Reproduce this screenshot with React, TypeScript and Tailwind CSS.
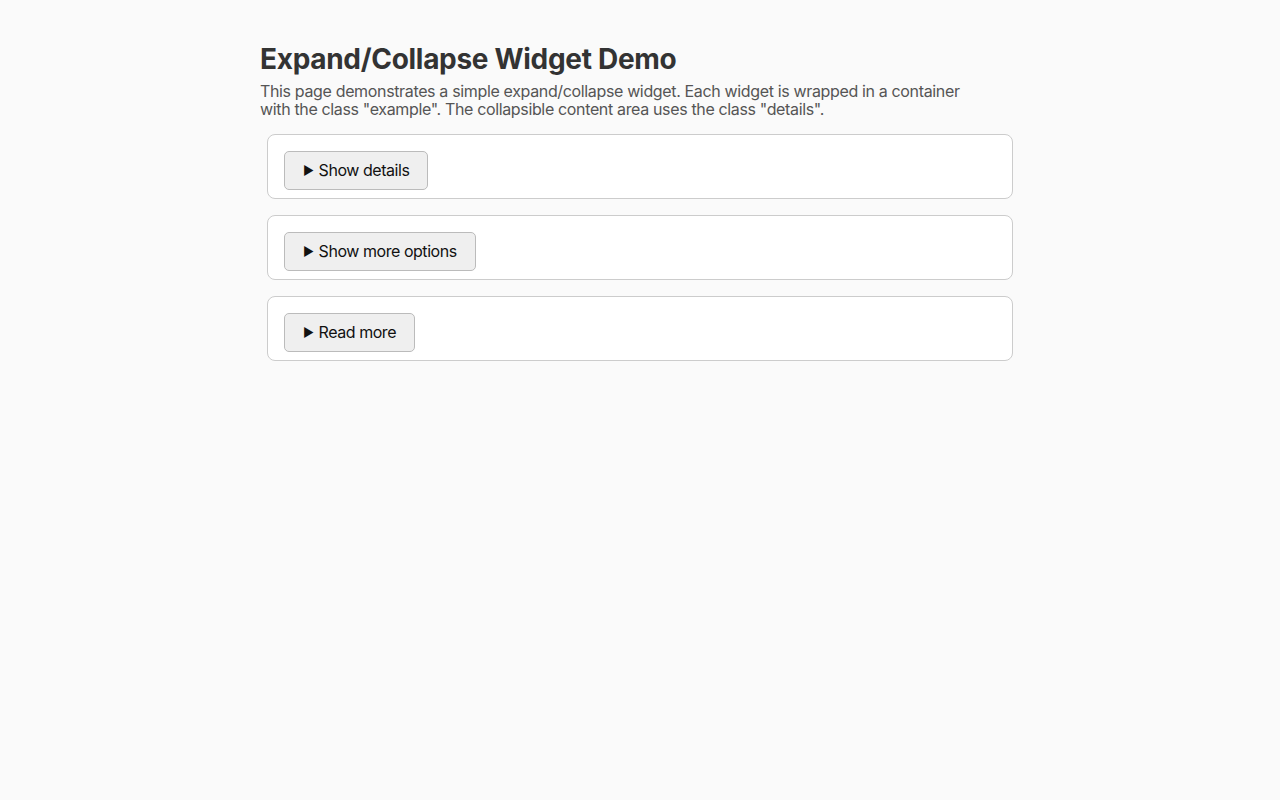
import { useState } from "react";

const WIDGETS = [
  { id: "details", label: "Show details", body: "Here are some additional details that were hidden." },
  { id: "options", label: "Show more options", body: "Option A, Option B, Option C." },
  { id: "read", label: "Read more", body: "The rest of the article continues here." },
];

function Example({ label, body }: { label: string; body: string }) {
  const [open, setOpen] = useState(false);
  return (
    <div className="example mx-[7px] rounded-lg border border-[#cccccc] bg-white px-4 pt-4 pb-2">
      <button
        onClick={() => setOpen((o) => !o)}
        className="flex items-center rounded-[5px] border border-[#bbbbbb] bg-[#efefef] px-[18px] py-[9px] text-base leading-[19px] tracking-[-0.45px] text-[#111]"
      >
        <span className="mr-[5px] text-[12px]">{open ? "▼" : "▶"}</span>
        {label}
      </button>
      {open && <div className="details pt-2 pb-2 text-[#444]">{body}</div>}
    </div>
  );
}

export default function App() {
  return (
    <div className="min-h-screen bg-[#fafafa] font-['Inter',sans-serif]">
      <div className="mx-auto w-[760px] pt-[41px]">
        <h1 className="mb-[5px] text-[28px] font-bold leading-[36px] tracking-[-0.3px] text-[#333333]">
          Expand/Collapse Widget Demo
        </h1>
        <p className="max-w-[720px] text-base leading-[18px] tracking-[-0.35px] text-[#555555]">
          This page demonstrates a simple expand/collapse widget. Each widget is wrapped in a container
          with the class "example". The collapsible content area uses the class "details".
        </p>
        <div className="mt-4 flex flex-col gap-4">
          {WIDGETS.map((w) => (
            <Example key={w.id} label={w.label} body={w.body} />
          ))}
        </div>
      </div>
    </div>
  );
}
